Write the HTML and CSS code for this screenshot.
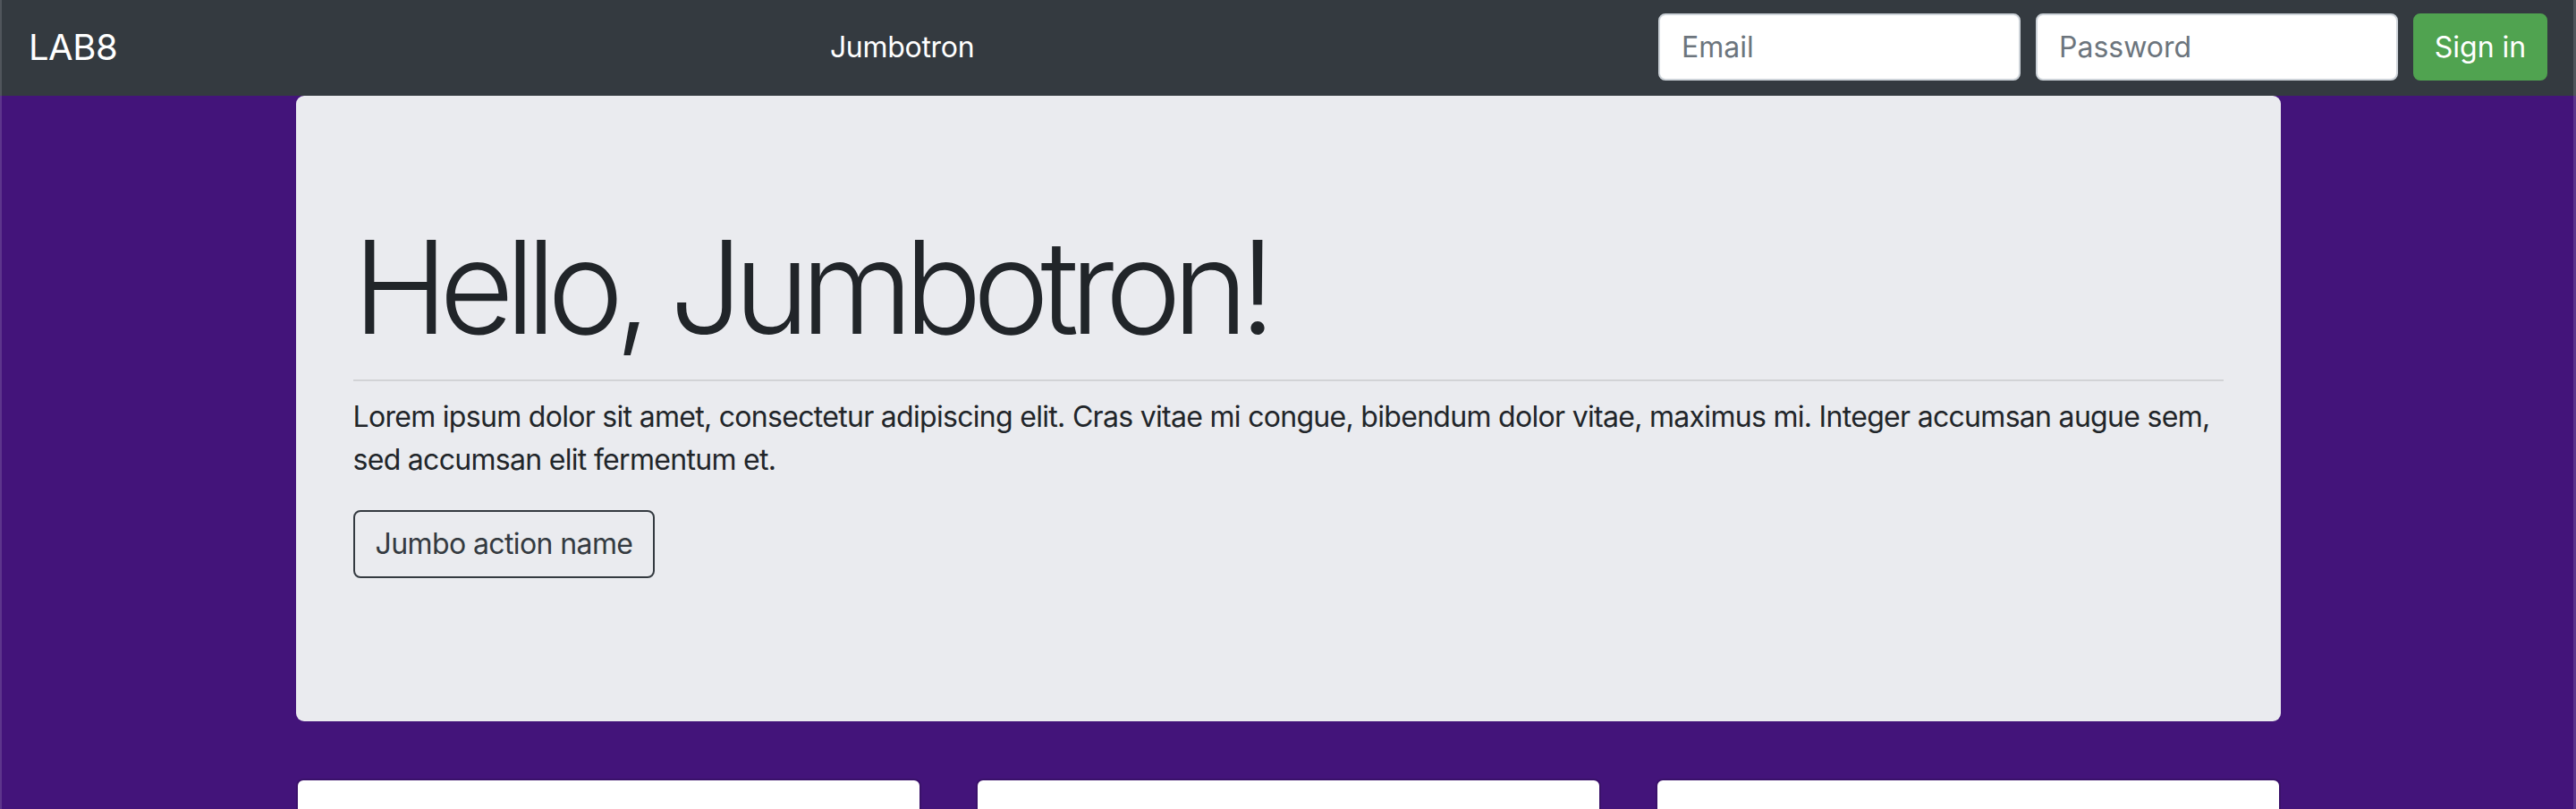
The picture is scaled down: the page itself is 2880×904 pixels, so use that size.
FILE: index.html
```html
<!DOCTYPE html>
<html lang="en">
<head>
<meta charset="utf-8">
<title>LAB8</title>
<link rel="stylesheet" href="styles.css">
</head>
<body>
<nav class="navbar">
  <a class="brand" href="#">LAB8</a>
  <ul class="nav">
    <li><a class="nav-link" href="#">Jumbotron</a></li>
  </ul>
  <form class="signin">
    <input class="field" type="text" placeholder="Email">
    <input class="field" type="password" placeholder="Password">
    <button class="btn-signin" type="button">Sign in</button>
  </form>
</nav>
<main class="container">
  <section class="jumbotron">
    <h1 class="display">Hello, Jumbotron!</h1>
    <hr class="rule">
    <p class="text">Lorem ipsum dolor sit amet, consectetur adipiscing elit. Cras vitae mi congue, bibendum dolor vitae, maximus mi. Integer accumsan augue sem, sed accumsan elit fermentum et.</p>
    <p class="actions"><a class="btn-outline" href="#">Jumbo action name</a></p>
  </section>
  <div class="cards">
    <div class="card"></div>
    <div class="card"></div>
    <div class="card"></div>
  </div>
</main>
<div class="frame"></div>
</body>
</html>
```

FILE: styles.css
```css
* { box-sizing: border-box; }

html, body {
  margin: 0;
  padding: 0;
}

body {
  background: #43147a;
  font-family: Inter, "Helvetica Neue", Arial, sans-serif;
  color: #212529;
  overflow: hidden;
}

.navbar {
  display: flex;
  align-items: center;
  height: 107px;
  padding: 0 32px 2px 32px;
  background: #343a40;
}

.brand {
  color: #fff;
  text-decoration: none;
  font-size: 40px;
  line-height: 1.5;
  letter-spacing: -0.5px;
  margin-right: 32px;
}

.nav {
  list-style: none;
  margin: 0 auto;
  padding: 0;
  display: flex;
}

.nav-link {
  display: block;
  color: #fff;
  text-decoration: none;
  font-size: 32px;
  letter-spacing: -0.3px;
  padding: 16px;
}

.signin {
  display: flex;
  align-items: center;
  gap: 17px;
  margin: 0;
}

.field {
  width: 405px;
  height: 75px;
  padding: 0 24px;
  font-family: inherit;
  font-size: 32px;
  color: #495057;
  background: #fff;
  border: 2px solid #ced4da;
  border-radius: 8px;
  outline: none;
}

.field::placeholder {
  color: #6c757d;
  opacity: 1;
}

.btn-signin {
  width: 150px;
  height: 75px;
  padding: 0;
  font-family: inherit;
  font-size: 32px;
  color: #fff;
  background: #50a350;
  border: 2px solid #50a350;
  border-radius: 8px;
}

.container {
  width: 2219px;
  margin: 0 auto;
}

.jumbotron {
  background: #eaebef;
  border-radius: 9px;
  padding: 128px 64px 128px;
  margin-bottom: 64px;
}

.display {
  margin: 0;
  font-size: 144px;
  font-weight: 300;
  line-height: 1.2;
  letter-spacing: -0.069em;
}

.rule {
  margin: 16px 0;
  border: 0;
  border-top: 2px solid rgba(0, 0, 0, 0.1);
  height: 0;
}

.text {
  margin: 0 0 32px;
  font-size: 32px;
  line-height: 48px;
  letter-spacing: -0.7px;
}

.actions {
  margin: 0 0 32px;
  display: flex;
}

.btn-outline {
  display: inline-block;
  height: 76px;
  padding: 0 23px;
  font-size: 32px;
  line-height: 72px;
  letter-spacing: -0.6px;
  color: #343a40;
  text-decoration: none;
  border: 2px solid #343a40;
  border-radius: 8px;
}

.cards {
  display: grid;
  grid-template-columns: repeat(3, 1fr);
  gap: 61px;
}

.card {
  height: 420px;
  background: #fff;
  border: 2px solid rgba(0, 0, 0, 0.125);
  border-radius: 8px;
  background-clip: padding-box;
}

.frame {
  position: fixed;
  inset: 0;
  border-left: 2px solid rgba(255, 255, 255, 0.14);
  border-right: 3px solid rgba(255, 255, 255, 0.14);
  pointer-events: none;
}
```
